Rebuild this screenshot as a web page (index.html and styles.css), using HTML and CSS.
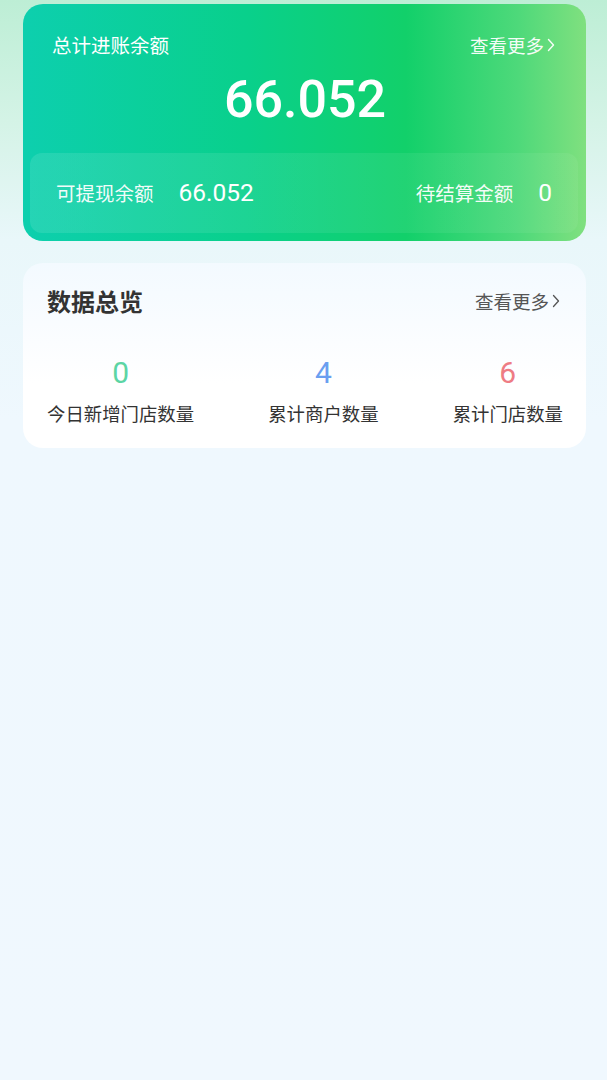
FILE: index.html
```html
<!DOCTYPE html>
<html lang="zh-CN">
<head>
  <meta charset="UTF-8" />
  <meta name="viewport" content="width=device-width, initial-scale=1.0"/>
  <title>首页</title>
  <link rel="stylesheet" href="styles.css">
</head>
<body>
  <div class="page">
    <div class="balance-card">
      <div class="card-head">
        <span class="head-title">总计进账余额</span>
        <a class="more">查看更多<svg class="arrow" viewBox="0 0 8 14" width="8" height="14"><path d="M1.5 1.5 L6.5 7 L1.5 12.5" fill="none" stroke="currentColor" stroke-width="1.4" stroke-linecap="round" stroke-linejoin="round"/></svg></a>
      </div>
      <div class="total">66.052</div>
      <div class="sub-panel">
        <div class="sub-item">
          <span class="sub-label">可提现余额</span>
          <span class="sub-value">66.052</span>
        </div>
        <div class="sub-item">
          <span class="sub-label">待结算金额</span>
          <span class="sub-value">0</span>
        </div>
      </div>
    </div>

    <div class="data-card">
      <div class="data-head">
        <span class="data-title">数据总览</span>
        <a class="more more-dark">查看更多<svg class="arrow" viewBox="0 0 8 14" width="8" height="14"><path d="M1.5 1.5 L6.5 7 L1.5 12.5" fill="none" stroke="currentColor" stroke-width="1.3" stroke-linecap="round" stroke-linejoin="round"/></svg></a>
      </div>
      <div class="stats">
        <div class="stat">
          <div class="stat-num green">0</div>
          <div class="stat-label">今日新增门店数量</div>
        </div>
        <div class="stat">
          <div class="stat-num blue">4</div>
          <div class="stat-label">累计商户数量</div>
        </div>
        <div class="stat">
          <div class="stat-num red">6</div>
          <div class="stat-label">累计门店数量</div>
        </div>
      </div>
    </div>
  </div>
</body>
</html>
```

FILE: styles.css
```css
html, body {
  margin: 0;
  padding: 0;
}

body {
  font-family: "Noto Sans CJK SC", "Noto Sans", sans-serif;
  background: #f0f8fe;
  color: #333;
}

.page {
  min-height: 1080px;
  box-sizing: border-box;
  padding: 4px 21px 0 23px;
  background: linear-gradient(180deg, #bdeed5 0px, #d4f3e6 120px, #e9f7fa 240px, #eff8fe 420px, #f0f8fe 100%);
}

.balance-card {
  height: 237px;
  box-sizing: border-box;
  border-radius: 20px;
  background: linear-gradient(90deg, #0dcfae 0%, #09d08b 40%, #12d06a 68%, #4ed97a 88%, #80e07f 100%);
  padding: 29px 8px 8px 7px;
  color: #fff;
  display: flex;
  flex-direction: column;
}

.card-head {
  display: flex;
  justify-content: space-between;
  align-items: center;
  padding: 0 23px 0 22px;
  height: 24px;
}

.head-title {
  font-size: 19.5px;
  line-height: 24px;
}

.more {
  display: flex;
  align-items: center;
  gap: 3px;
  font-size: 18.5px;
  line-height: 24px;
  color: rgba(255, 255, 255, 0.95);
}

.more-dark {
  color: #555;
  font-size: 18.5px;
}

.arrow {
  display: block;
}

.total {
  margin-top: 13px;
  text-align: center;
  font-family: Roboto, "Noto Sans", sans-serif;
  font-size: 52px;
  font-weight: 500;
  line-height: 60px;
  padding-left: 2px;
}

.sub-panel {
  margin-top: 23px;
  height: 80px;
  border-radius: 12px;
  background: linear-gradient(90deg, rgba(255,255,255,0.1), rgba(255,255,255,0.07) 60%, rgba(255,255,255,0.05));
  display: flex;
  justify-content: space-between;
  align-items: center;
  padding: 0 26px 0 26px;
  box-sizing: border-box;
}

.sub-item {
  display: flex;
  align-items: center;
  gap: 25px;
}

.sub-label {
  font-size: 19.5px;
  line-height: 26px;
  color: rgba(255, 255, 255, 0.95);
}

.sub-value {
  font-family: Roboto, "Noto Sans", sans-serif;
  font-size: 24.5px;
  line-height: 30px;
}

.data-card {
  margin-top: 22px;
  height: 185px;
  box-sizing: border-box;
  border-radius: 20px;
  background: linear-gradient(180deg, #f3faff 0px, #f9fcff 60px, #ffffff 120px);
  padding: 22px 26px 22px 24px;
}

.data-head {
  display: flex;
  justify-content: space-between;
  align-items: center;
  height: 32px;
}

.data-title {
  font-size: 24px;
  font-weight: 700;
  line-height: 32px;
  color: #333;
}

.stats {
  margin-top: 38px;
  display: flex;
  justify-content: space-between;
  padding-right: 0;
  margin-right: -3px;
}

.stat {
  text-align: center;
}

.stat-num {
  font-family: Roboto, "Noto Sans", sans-serif;
  font-size: 30px;
  line-height: 36px;
}

.green { color: #5cd5a4; }
.blue { color: #6a9ff0; }
.red { color: #ee7c84; }

.stat-label {
  margin-top: 9px;
  font-size: 18.4px;
  line-height: 26px;
  color: #333;
}
```
